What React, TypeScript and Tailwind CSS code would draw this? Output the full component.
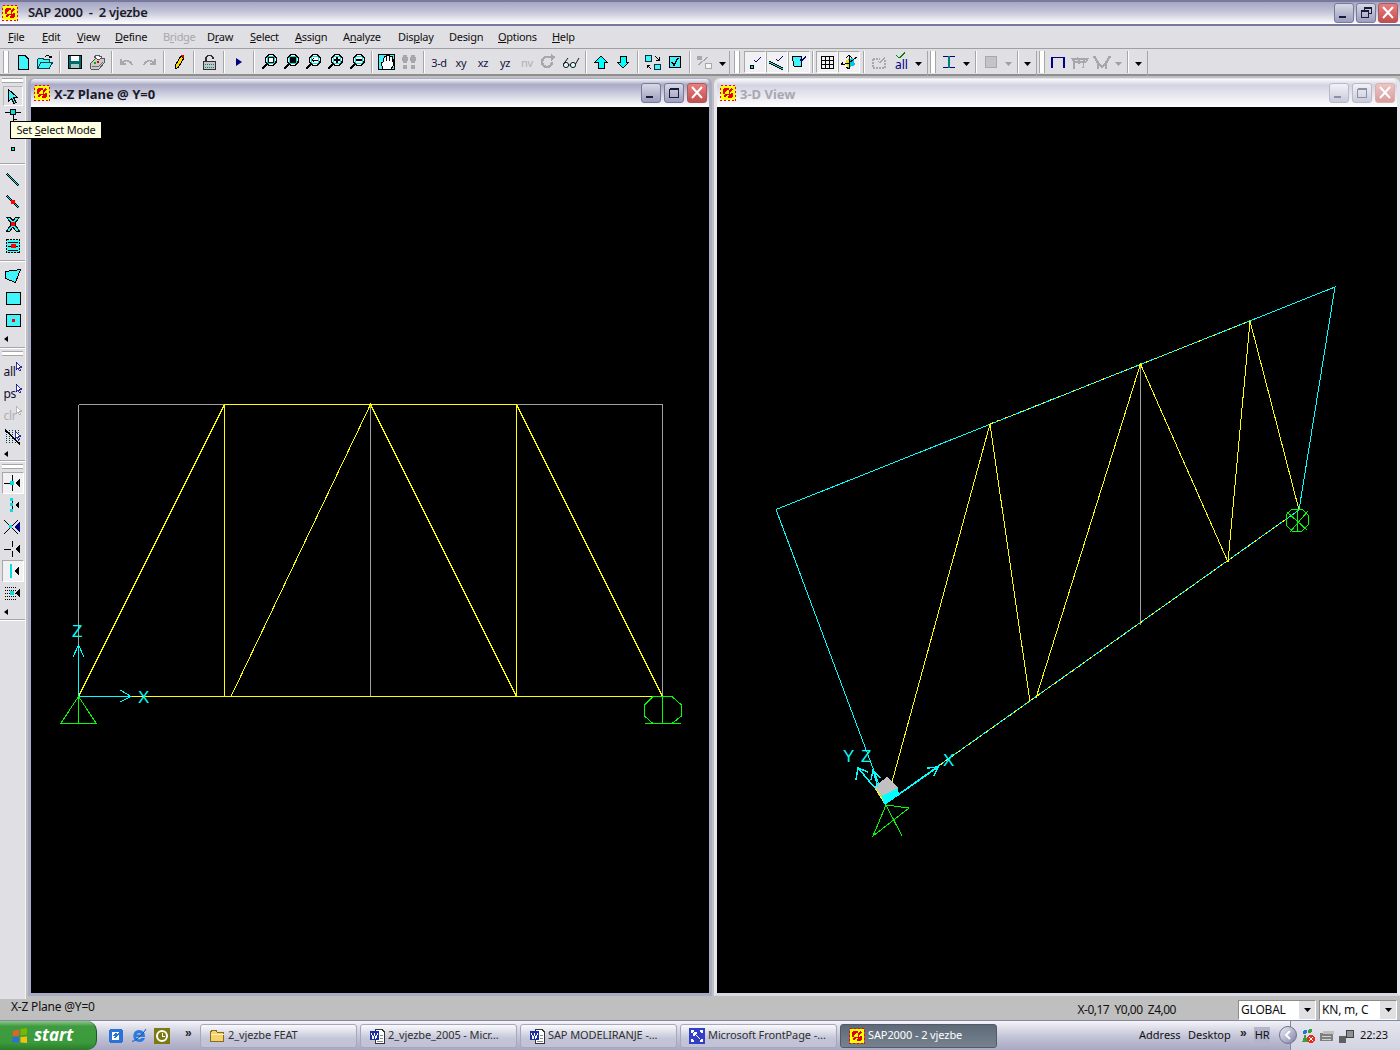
import type { ReactNode } from 'react';

const D = '#40f4fa';

function Ico({ children, w = 16, h = 16 }: { children: ReactNode; w?: number; h?: number }) {
  return (
    <svg width={w} height={h} viewBox={`0 0 ${w} ${h}`} shapeRendering="crispEdges" className="block shrink-0">
      {children}
    </svg>
  );
}

function SapLogo() {
  return (
    <Ico>
      <rect x="1" y="1" width="14" height="14" fill="#ffff00" />
      <rect x="0.5" y="0.5" width="15" height="15" fill="none" stroke="#ff0000" strokeDasharray="2 2" />
      <path d="M4 4L12 12M12 4L4 12M4 4H9M4 4V9M12 12V8M12 12H8" stroke="#e00000" strokeWidth="1.6" fill="none" />
      <rect x="6" y="6" width="3" height="3" fill="#ffff00" />
    </Ico>
  );
}

function Mag({ children }: { children?: ReactNode }) {
  return (
    <Ico w={18} h={18}>
      <circle cx="11" cy="7" r="5.5" fill="#fff" stroke="#000" strokeWidth="1.4" />
      <circle cx="11" cy="7" r="4" fill="none" stroke="#00e0e0" />
      <path d="M7 11L2 16" stroke="#000" strokeWidth="2.4" />
      {children}
    </Ico>
  );
}

function WinBtn({ kind, dim }: { kind: 'min' | 'max' | 'restore' | 'close'; dim?: boolean }) {
  const face =
    kind === 'close'
      ? dim
        ? 'border-[#d9b0b0] bg-[linear-gradient(180deg,#ecc4c4,#d89c9c)]'
        : 'border-[#a85a5a] bg-[linear-gradient(180deg,#e88080,#c44e4e)]'
      : dim
        ? 'border-[#b9bac9] bg-[linear-gradient(180deg,#f2f2f6,#c9cad9)]'
        : 'border-[#777a9c] bg-[linear-gradient(180deg,#d8d9e6,#9c9ebd)]';
  const ink = dim ? '#8e8fa8' : '#1a1a3a';
  return (
    <div className={`flex h-[20px] w-[20px] items-center justify-center rounded-[3px] border ${face}`}>
      <svg width="16" height="16" viewBox="0 0 16 16" shapeRendering="crispEdges">
        {kind === 'min' && <rect x="3" y="11" width="7" height="2" fill={ink} />}
        {kind === 'max' && <path d="M3.5 4.5H12.5V12.5H3.5ZM3.5 3.5H12.5" fill="none" stroke={ink} />}
        {kind === 'restore' && (
          <path d="M6.5 5.5V2.5H13.5V8.5H10.5M3.5 5.5H10.5V12.5H3.5ZM3.5 6.5H10.5M6.5 3.5H13.5" fill="none" stroke={ink} />
        )}
        {kind === 'close' && <path d="M3 2L13 13M13 2L3 13" stroke="#fff" strokeWidth="2" shapeRendering="auto" />}
      </svg>
    </div>
  );
}

function Key({ text, at }: { text: string; at: number }) {
  return (
    <>
      {text.slice(0, at)}
      <span className="underline underline-offset-1">{text[at]}</span>
      {text.slice(at + 1)}
    </>
  );
}

const menus = [
  { label: 'File', at: 0, w: 'w-[34px]' },
  { label: 'Edit', at: 0, w: 'w-[35px]' },
  { label: 'View', at: 0, w: 'w-[38px]' },
  { label: 'Define', at: 0, w: 'w-[48px]' },
  { label: 'Bridge', at: 1, w: 'w-[44px]', dim: true },
  { label: 'Draw', at: 1, w: 'w-[43px]' },
  { label: 'Select', at: 0, w: 'w-[45px]' },
  { label: 'Assign', at: 0, w: 'w-[48px]' },
  { label: 'Analyze', at: 1, w: 'w-[55px]' },
  { label: 'Display', at: 3, w: 'w-[51px]' },
  { label: 'Design', at: 4, w: 'w-[49px]' },
  { label: 'Options', at: 0, w: 'w-[54px]' },
  { label: 'Help', at: 0, w: 'w-[40px]' },
];

function Btn({ children, pressed }: { children: ReactNode; pressed?: boolean }) {
  return (
    <div
      className={`flex h-[22px] w-[22px] shrink-0 items-center justify-center ${
        pressed ? 'border border-[#a8a8a8] border-r-white border-b-white bg-[#f1f1f3]' : ''
      }`}
    >
      {children}
    </div>
  );
}

function Sep({ w = 'w-[8px]' }: { w?: string }) {
  return (
    <div className={`flex h-[22px] shrink-0 justify-center ${w}`}>
      <div className="h-full w-[2px] border-r border-l border-r-white border-l-[#a6a6a6]" />
    </div>
  );
}

function Dd({ dim, w = 'w-[12px]' }: { dim?: boolean; w?: string }) {
  return (
    <div className={`flex h-[22px] shrink-0 items-center justify-center pt-[3px] ${w}`}>
      <svg width="7" height="4" viewBox="0 0 7 4">
        <path d="M0 0H7L3.5 4Z" fill={dim ? '#a0a0a0' : '#000'} />
      </svg>
    </div>
  );
}

function Grip({ w }: { w: string }) {
  return (
    <div className={`flex h-[22px] shrink-0 justify-center ${w}`}>
      <div className="h-full w-[6px] border-x border-x-[#a6a6a6] bg-white" />
    </div>
  );
}

function Txt({ children, dim }: { children: ReactNode; dim?: boolean }) {
  return (
    <span className={`text-[11px] leading-none tracking-[-0.3px] ${dim ? 'text-[#b0b0b0]' : 'text-[#14143c]'}`}>{children}</span>
  );
}

function ArrowUp() {
  return (
    <Ico>
      <path d="M8 2L14 8H11V14H5V8H2Z" fill="#00ffff" stroke="#000" />
    </Ico>
  );
}

function ArrowDown() {
  return (
    <Ico>
      <path d="M5 2H11V8H14L8 14L2 8H5Z" fill="#00ffff" stroke="#000" />
    </Ico>
  );
}

function TopToolbar() {
  return (
    <div className="flex h-[27px] items-start border-b-2 border-b-[#8f8f8f] bg-[#e0dfe3] pt-[2px]">
      <div className="flex h-[25px] w-[730px] shrink-0 border-r border-[#a6a6a6]">
        <Grip w="w-[12px]" />
        <Btn>
          <Ico>
            <path d="M3.5 1.5H10L13.5 5V15.5H3.5Z" fill={D} stroke="#000" />
          </Ico>
        </Btn>
        <Btn>
          <Ico w={18}>
            <path d="M1.5 14.5V5.5L3 4H7L8 5.5H13V8M1.5 14.5L5 8H17L13 14.5Z" fill={D} stroke="#004848" />
            <path d="M9 3C11 1 14 1 15 4M15 4L13 3.5M15 4L16 2" fill="none" stroke="#000" />
          </Ico>
        </Btn>
        <Sep />
        <Btn>
          <Ico>
            <rect x="1.5" y="1.5" width="13" height="13" fill="#006c6c" stroke="#000" />
            <rect x="4" y="2" width="8" height="5" fill="#fff" />
            <rect x="4" y="10" width="8" height="4" fill="#a8c8c8" />
          </Ico>
        </Btn>
        <Btn>
          <Ico w={18}>
            <path d="M4 8L8 4H16V9L11 15H3L2 10Z" fill="#c8c8c8" stroke="#585858" />
            <path d="M6 3L9 1L14 3L11 6Z" fill="#fff" stroke="#585858" />
            <rect x="6" y="8" width="2" height="2" fill="#00b000" />
            <rect x="9" y="7" width="2" height="2" fill="#e00000" />
            <path d="M4 12L11 12L15 8" fill="none" stroke="#707070" />
          </Ico>
        </Btn>
        <Sep />
        <Btn>
          <Ico>
            <path d="M2 5V10H7M2.5 9.5C5 5.5 11 5.5 13 11" fill="none" stroke="#a8a8a8" strokeWidth="1.6" />
          </Ico>
        </Btn>
        <Btn>
          <Ico>
            <path d="M14 5V10H9M13.5 9.5C11 5.5 5 5.5 3 11" fill="none" stroke="#a8a8a8" strokeWidth="1.6" />
          </Ico>
        </Btn>
        <Sep />
        <Btn>
          <Ico>
            <path d="M5 15L4.5 11L10 2L13 4L7.5 13Z" fill="#ffd800" stroke="#000" />
            <path d="M10 2L11 0.5L13.5 2L13 4Z" fill="#e00000" />
          </Ico>
        </Btn>
        <Sep />
        <Btn>
          <Ico>
            <path d="M5 7V3.5L7 1.5H10L12 3.5V5" fill="none" stroke="#303030" strokeWidth="1.3" />
            <rect x="2.5" y="7.5" width="12" height="8" fill="#c4c4c4" stroke="#303030" />
            <path d="M4 10H13M4 13H13" stroke="#008080" strokeDasharray="1 1" />
          </Ico>
        </Btn>
        <Sep />
        <Btn>
          <svg width="6" height="8" viewBox="0 0 6 8">
            <path d="M0 0L6 4L0 8Z" fill="#000080" />
          </svg>
        </Btn>
        <Sep />
        <Btn>
          <Mag>
            <rect x="8.5" y="4.5" width="5" height="5" fill="none" stroke="#000" />
          </Mag>
        </Btn>
        <Btn>
          <Mag>
            <circle cx="11" cy="7" r="3.4" fill="#000" />
          </Mag>
        </Btn>
        <Btn>
          <Mag>
            <path d="M14 7H8M10 5L8 7L10 9" fill="none" stroke="#000" />
          </Mag>
        </Btn>
        <Btn>
          <Mag>
            <path d="M8 7H14M11 4V10" fill="none" stroke="#000" strokeWidth="1.4" />
          </Mag>
        </Btn>
        <Btn>
          <Mag>
            <path d="M8 7H14" fill="none" stroke="#000" strokeWidth="1.4" />
          </Mag>
        </Btn>
        <Sep />
        <Btn>
          <Ico w={18} h={18}>
            <rect x="0.5" y="1.5" width="16" height="15" fill={D} stroke="#000" />
            <path d="M5 16L3 9L5 9L6 5V3H8V8L9 2H11V8L12 3H14V9L15 6H16L15 13L13 16Z" fill="#fff" stroke="#000" />
          </Ico>
        </Btn>
        <Btn>
          <Ico w={18}>
            <ellipse cx="5" cy="5" rx="3" ry="4" fill="#a8a8a8" />
            <ellipse cx="13" cy="5" rx="3" ry="4" fill="#a8a8a8" />
            <rect x="3" y="11" width="4" height="4" rx="1" fill="#a8a8a8" />
            <rect x="11" y="11" width="4" height="4" rx="1" fill="#a8a8a8" />
          </Ico>
        </Btn>
        <Sep />
        <Btn>
          <Txt>3-d</Txt>
        </Btn>
        <Btn>
          <Txt>xy</Txt>
        </Btn>
        <Btn>
          <Txt>xz</Txt>
        </Btn>
        <Btn>
          <Txt>yz</Txt>
        </Btn>
        <Btn>
          <Txt dim>nv</Txt>
        </Btn>
        <Btn>
          <Ico w={18}>
            <path d="M12 8A5 5 0 1 1 8 3H12" fill="none" stroke="#a8a8a8" strokeWidth="2.4" />
            <path d="M11 0L16 3L11 7Z" fill="#a8a8a8" />
          </Ico>
        </Btn>
        <Btn>
          <svg width="18" height="16" viewBox="0 0 18 16" className="block shrink-0">
            <circle cx="4" cy="11" r="2.6" fill="#d8ffff" stroke="#000" strokeWidth="0.9" />
            <circle cx="11" cy="11" r="2.6" fill="#d8ffff" stroke="#000" strokeWidth="0.9" />
            <path d="M6.6 11H8.4M1.6 10L6 4M13.5 10L17 4" fill="none" stroke="#000" strokeWidth="0.9" />
          </svg>
        </Btn>
        <Sep />
        <Btn>
          <ArrowUp />
        </Btn>
        <Btn>
          <ArrowDown />
        </Btn>
        <Sep />
        <Btn>
          <Ico w={18}>
            <rect x="1.5" y="1.5" width="6" height="6" fill={D} stroke="#003040" />
            <rect x="10.5" y="10.5" width="6" height="5" fill={D} stroke="#003040" />
            <path d="M11 2L15 6M15 3V6H12M7 15L3 11M3 14V11H6" fill="none" stroke="#000" />
          </Ico>
        </Btn>
        <Btn>
          <Ico>
            <rect x="2.5" y="2.5" width="11" height="11" fill={D} stroke="#000" />
            <path d="M5 8L7 11L11 4" fill="none" stroke="#000" strokeWidth="1.4" />
          </Ico>
        </Btn>
        <Sep />
        <Btn>
          <Ico w={18}>
            <rect x="1" y="2" width="5" height="4" fill="#a8a8a8" />
            <rect x="9.5" y="9.5" width="6" height="5" fill="#f4f4f4" stroke="#a8a8a8" />
            <path d="M2 11L12 3" stroke="#a8a8a8" strokeWidth="1.4" />
          </Ico>
        </Btn>
        <Dd />
      </div>
      <div className="flex h-[25px] w-[198px] shrink-0 border-r border-[#a6a6a6]">
        <Grip w="w-[14px]" />
        <Btn pressed>
          <Ico>
            <rect x="3" y="11" width="3" height="3" fill="#00e0e0" stroke="#000" />
            <path d="M7 6L9 8L14 3" fill="none" stroke="#000080" strokeWidth="1.4" />
          </Ico>
        </Btn>
        <Btn pressed>
          <Ico w={18}>
            <path d="M1 8L15 15" stroke="#000" strokeWidth="3" />
            <path d="M1 8L15 15" stroke="#00e0e0" />
            <path d="M8 5L10 7L15 2" fill="none" stroke="#000080" strokeWidth="1.4" />
          </Ico>
        </Btn>
        <Btn pressed>
          <Ico w={18}>
            <path d="M2 2H12L11 13L4 12Z" fill={D} stroke="#000" />
            <path d="M10 5L12 7L16 2" fill="none" stroke="#000080" strokeWidth="1.4" />
          </Ico>
        </Btn>
        <Sep w="w-[6px]" />
        <Btn pressed>
          <Ico>
            <path d="M2.5 2.5H14.5V14.5H2.5ZM6.5 2.5V14.5M10.5 2.5V14.5M2.5 6.5H14.5M2.5 10.5H14.5" fill="none" stroke="#000" />
          </Ico>
        </Btn>
        <Btn pressed>
          <Ico w={18}>
            <path d="M6 6L13 4L15 11L8 14Z" fill="#00c8d8" />
            <path d="M6 6H9V13L6 11Z" fill="#f0e000" />
            <path d="M9 1V15M9 1L6 4M9 1L12 4M1 11L9 9L17 3M1 11L3 8M9 15L6 13" fill="none" stroke="#000" />
          </Ico>
        </Btn>
        <Sep />
        <Btn>
          <Ico>
            <path d="M2 5H9M2 5V14H14V5" fill="none" stroke="#a8a8a8" strokeWidth="1.4" strokeDasharray="2 1" />
            <path d="M7 7L9 9L14 3" fill="none" stroke="#a8a8a8" strokeWidth="1.4" />
          </Ico>
        </Btn>
        <Btn>
          <div className="relative h-[20px] w-[16px]">
            <svg width="12" height="7" viewBox="0 0 12 7" className="absolute top-0 left-[2px]" shapeRendering="crispEdges">
              <path d="M1 3L4 6L10 1" fill="none" stroke="#008000" strokeWidth="1.4" />
            </svg>
            <span className="absolute top-[7px] left-[2px] text-[12px] leading-none text-[#000080]">all</span>
          </div>
        </Btn>
        <Dd />
      </div>
      <div className="flex h-[25px] w-[109px] shrink-0 border-r border-[#a6a6a6]">
        <Grip w="w-[10px]" />
        <Btn>
          <Ico>
            <path d="M2 2.5H14M2 13.5H14" stroke="#000080" strokeWidth="1.6" />
            <path d="M8 2V14" stroke="#008080" strokeWidth="1.6" />
          </Ico>
        </Btn>
        <Dd />
        <Sep />
        <Btn>
          <Ico>
            <rect x="2" y="2" width="12" height="12" fill="#a8a8a8" />
            <rect x="3" y="3" width="10" height="10" fill="#c4c4c4" />
          </Ico>
        </Btn>
        <Dd dim />
        <Sep w="w-[7px]" />
        <Dd />
      </div>
      <div className="flex h-[25px] w-[111px] shrink-0 border-r border-[#a6a6a6]">
        <Grip w="w-[10px]" />
        <Btn>
          <Ico>
            <path d="M2 14V3.5H14V14" fill="none" stroke="#000080" strokeWidth="1.4" />
          </Ico>
        </Btn>
        <Btn>
          <Ico w={18}>
            <path d="M1 5H17L15 8H3ZM3 4V15M13 6L12 14M3 7L7 3M8 5V10" fill="none" stroke="#a8a8a8" strokeWidth="1.2" />
          </Ico>
        </Btn>
        <Btn>
          <Ico w={18}>
            <path d="M1 2L5 9V15M17 2L13 9V15M5 9L9 13L13 9" fill="none" stroke="#a8a8a8" strokeWidth="2.4" />
          </Ico>
        </Btn>
        <Dd dim w="w-[10px]" />
        <Sep w="w-[9px]" />
        <Dd />
      </div>
      <div className="h-[25px] flex-1" />
    </div>
  );
}

function VGrip() {
  return <div className="mx-[2px] my-[2px] h-[5px] border-y border-y-[#a6a6a6] bg-white" />;
}

function VSep() {
  return (
    <div className="flex h-[8px] items-center">
      <div className="h-[2px] w-full border-y border-t-[#a6a6a6] border-b-white" />
    </div>
  );
}

function VBtn({ children, pressed, h = 'h-[22px]' }: { children: ReactNode; pressed?: boolean; h?: string }) {
  return (
    <div
      className={`mx-auto flex w-[22px] items-center justify-center ${h} ${
        pressed ? 'border border-[#a8a8a8] border-r-white border-b-white bg-[#f1f1f3]' : ''
      }`}
    >
      {children}
    </div>
  );
}

function Chevron({ h = 'h-[15px]' }: { h?: string }) {
  return (
    <div className={`flex items-center pl-[4px] ${h}`}>
      <svg width="4" height="6" viewBox="0 0 4 6">
        <path d="M4 0L0 3L4 6Z" fill="#000" />
      </svg>
    </div>
  );
}

function Pick({ fill = '#000', children }: { fill?: string; children?: ReactNode }) {
  return (
    <Ico w={18}>
      <path d="M0 8H7M9 8H9M8 0V6M8 10V16" stroke="#000" fill="none" />
      <path d="M16 3V13L11 8Z" fill={fill} />
      {children}
    </Ico>
  );
}

function Cursor({ dim }: { dim?: boolean }) {
  return (
    <svg width="7" height="10" viewBox="0 0 7 10" className="absolute top-[2px] right-0" shapeRendering="crispEdges">
      <path d="M1 0V8L3 6L5 9L6 8L4 5H6.5Z" fill="#fff" stroke={dim ? '#a8a8a8' : '#000080'} strokeWidth="0.8" />
    </svg>
  );
}

function LetterBtn({ text, dim }: { text: string; dim?: boolean }) {
  return (
    <VBtn>
      <div className="relative h-[22px] w-[18px]">
        <span className={`absolute top-[6px] left-0 text-[12px] leading-none tracking-[-0.3px] ${dim ? 'text-[#b0b0b0]' : 'text-[#101030]'}`}>
          {text}
        </span>
        <Cursor dim={dim} />
      </div>
    </VBtn>
  );
}

function LeftToolbar() {
  return (
    <div className="flex w-[26px] shrink-0 flex-col border-r border-[#f4f4f6] bg-[#e0dfe3]">
      <VGrip />
      <VBtn>
        <div className="flex h-[20px] w-[20px] items-center justify-center border border-[#b8b8b8] border-r-white border-b-white">
          <Ico>
            <path d="M3.5 1.5L12.5 9.5H8.5L11 14.5L9 15.5L6.5 10.5L3.5 13.5Z" fill={D} stroke="#000" />
          </Ico>
        </div>
      </VBtn>
      <VBtn h="h-[16px]">
        <Ico>
          <path d="M0 5.5H5M11 5.5H16" stroke="#000" />
          <rect x="5.5" y="2.5" width="5" height="5" fill="#00e0e0" stroke="#000" />
          <path d="M8 8V14L10 12H12" fill="none" stroke="#000" />
        </Ico>
      </VBtn>
      <div className="h-[15px]" />
      <VBtn>
        <Ico>
          <rect x="6.5" y="6.5" width="3" height="3" fill="#00e0e0" stroke="#000" />
        </Ico>
      </VBtn>
      <VSep />
      <div className="h-[1px]" />
      <VBtn>
        <Ico>
          <path d="M2 2L14 14" stroke="#000" strokeWidth="2.6" />
          <path d="M2 2L14 14" stroke="#00e0e0" />
        </Ico>
      </VBtn>
      <VBtn>
        <Ico>
          <path d="M2 2L14 14" stroke="#000" strokeWidth="2.6" />
          <path d="M2 2L14 14" stroke="#00e0e0" />
          <rect x="6" y="6" width="4" height="4" fill="#ff0000" />
        </Ico>
      </VBtn>
      <VBtn>
        <Ico>
          <path d="M2 1L6 8L2 15H5L8 11L11 15H14L10 8L14 1H11L8 5L5 1Z" fill={D} stroke="#000" />
          <path d="M1 1L15 15M15 1L1 15" stroke="#004040" />
          <rect x="6" y="6" width="4" height="4" fill="#ff0000" />
        </Ico>
      </VBtn>
      <VBtn>
        <Ico>
          <rect x="1.5" y="1.5" width="13" height="13" fill={D} stroke="#000" strokeDasharray="2 1" />
          <path d="M3 4H13M3 12H13" stroke="#000" />
          <rect x="6" y="6" width="5" height="4" fill="#ff0000" />
          <path d="M3 8H6M11 8H13" stroke="#000" />
        </Ico>
      </VBtn>
      <VSep />
      <VBtn>
        <Ico>
          <path d="M0.5 3.5L15.5 1.5L10.5 14.5L0.5 10.5Z" fill={D} stroke="#000" />
        </Ico>
      </VBtn>
      <VBtn>
        <Ico>
          <rect x="1.5" y="2.5" width="14" height="12" fill={D} stroke="#000" />
        </Ico>
      </VBtn>
      <VBtn>
        <Ico>
          <rect x="1.5" y="2.5" width="14" height="12" fill={D} stroke="#000" />
          <rect x="7" y="7" width="3" height="3" fill="#ff0000" />
        </Ico>
      </VBtn>
      <Chevron />
      <div className="mt-[1px] h-[2px] border-y border-t-[#a6a6a6] border-b-white" />
      <VGrip />
      <div className="h-[2px]" />
      <LetterBtn text="all" />
      <LetterBtn text="ps" />
      <LetterBtn text="clr" dim />
      <VBtn>
        <div className="relative h-[16px] w-[16px]">
          <Ico>
            <path d="M1 1V15M4 1V15M7 1V15M10 1V15M13 1V15" stroke="#004040" strokeDasharray="1 1" />
            <path d="M0 1L15 15" stroke="#000" strokeWidth="1.6" />
          </Ico>
          <Cursor />
        </div>
      </VBtn>
      <Chevron h="h-[12px]" />
      <div className="h-[2px] border-y border-t-[#a6a6a6] border-b-white" />
      <VGrip />
      <div className="h-[1px]" />
      <VBtn pressed>
        <Pick>
          <rect x="6" y="6" width="4" height="4" fill="#00e0e0" />
        </Pick>
      </VBtn>
      <VBtn>
        <Ico w={18}>
          <path d="M8 3V14" stroke="#000" />
          <rect x="6" y="1" width="3" height="3" fill="#00e0e0" />
          <rect x="6" y="6" width="3" height="3" fill="#00e0e0" />
          <rect x="6" y="12" width="3" height="3" fill="#00e0e0" />
          <path d="M15 4V12L11 8Z" fill="#000" />
        </Ico>
      </VBtn>
      <VBtn>
        <Ico w={18}>
          <path d="M0 1L14 15M14 1L0 15" stroke="#000" />
          <rect x="5" y="6" width="3" height="3" fill="#00e0e0" />
          <path d="M16 2V13L10 8Z" fill="#000080" />
        </Ico>
      </VBtn>
      <VBtn>
        <Pick />
      </VBtn>
      <VBtn pressed>
        <Ico w={18}>
          <path d="M7 1V15" stroke="#00e0e0" strokeWidth="2" />
          <path d="M15 4V12L10 8Z" fill="#000" />
        </Ico>
      </VBtn>
      <VBtn>
        <Ico w={18}>
          <path d="M1 2H13M1 5H13M1 8H13M1 11H13M1 14H13" stroke="#000" strokeDasharray="1 1" />
          <rect x="6" y="6" width="4" height="4" fill="#00e0e0" />
          <path d="M16 4V12L11 8Z" fill="#000" />
        </Ico>
      </VBtn>
      <Chevron />
      <div className="h-[2px] border-y border-t-[#a6a6a6] border-b-white" />
      <div className="flex-1" />
    </div>
  );
}

function MdiWindow({
  title,
  active,
  children,
  className,
}: {
  title: string;
  active?: boolean;
  children: ReactNode;
  className: string;
}) {
  return (
    <div
      className={`flex flex-col rounded-t-[6px] border-[3px] border-t-[1px] ${
        active ? 'border-[#a9aac3]' : 'border-[#e6e6ee] border-b-[#d8d8e2]'
      } ${className}`}
    >
      <div
        className={`flex h-[28px] shrink-0 items-center rounded-t-[4px] pl-[3px] ${
          active
            ? 'bg-[linear-gradient(180deg,#f4f4f8_0%,#a9aac5_20%,#dfe0ea_70%,#ffffff_100%)]'
            : 'bg-[linear-gradient(180deg,#fafafc_0%,#d3d4e2_22%,#eeeef4_70%,#ffffff_100%)]'
        }`}
      >
        <SapLogo />
        <span
          className={`ml-[4px] pt-[3px] text-[13px] font-bold ${
            active ? 'text-[#1a1a2a]' : 'text-[#a8a8b0]'
          }`}
        >
          {title}
        </span>
        <div className="mr-[2px] ml-auto flex gap-[3px]">
          <WinBtn kind="min" dim={!active} />
          <WinBtn kind="max" dim={!active} />
          <WinBtn kind="close" dim={!active} />
        </div>
      </div>
      <div className="min-h-0 flex-1 bg-black">{children}</div>
    </div>
  );
}

function XzView() {
  return (
    <svg viewBox="31 107 678 886" className="block h-full w-full" shapeRendering="crispEdges" fill="none">
      <path d="M78.5 404.5H662.5V696.5M78.5 404.5V696.5M370.5 404.5V696.5" stroke="#a0a0a0" />
      <path
        d="M224.5 404.5H516.5M224.5 404.5V696.5M516.5 404.5V696.5M78.5 696.5H662.5M78.5 696.5L224.5 404.5M231 696.5L370.5 404.5L516.5 696.5M516.5 404.5L662.5 696.5"
        stroke="#ffff00"
      />
      <path d="M78.5 696.5V645M73 657L78.5 645L84 657M78.5 696.5H130M120 690L131 696.5L120 702" stroke="#00ffff" />
      <path d="M78.5 696.5L61 723H96ZM78.5 696.5V723" stroke="#00ff00" />
      <path
        d="M653 696.5H672L681.5 705V716L672 723.5M653 696.5L644.5 705V716L653 723.5M645 723.5H681M662.5 696.5V723.5"
        stroke="#00ff00"
      />
      <text x="72" y="637" fill="#00ffff" fontSize="17" fontWeight="200" shapeRendering="auto" className="font-['Liberation_Sans',sans-serif]">
        Z
      </text>
      <text x="138" y="703" fill="#00ffff" fontSize="17" fontWeight="200" shapeRendering="auto" className="font-['Liberation_Sans',sans-serif]">
        X
      </text>
    </svg>
  );
}

function ThreeDView() {
  return (
    <svg viewBox="717 107 680 886" className="block h-full w-full" shapeRendering="crispEdges" fill="none">
      <path d="M1140.5 364V625" stroke="#a0a0a0" />
      <path d="M776 509.5L1335 287L1299 510M776 509.5L886 803L1299 510" stroke="#00ffff" />
      <path d="M990 424L1250 321" stroke="#ffff00" strokeDasharray="3 5" />
      <path d="M940 765L1285 520" stroke="#ffff00" strokeDasharray="3 4" />
      <path
        d="M892 782L990 424L1030 702M1036 698L1140.5 364L1228 562L1250 321L1299 510"
        stroke="#ffff00"
      />
      <path d="M1292 509H1302L1308 515V525L1302 531H1292L1286 525V515ZM1287 512L1307 530M1308 511L1290 532M1297 509V531" stroke="#00ff00" />
      <path d="M886 805L909 808L873 836ZM886 805L902 836" stroke="#00ff00" />
      <path d="M874 787L887 777L898 788L880 797Z" fill="#c0c0c0" />
      <path d="M880 797L898 788L899 795L885 805Z" fill="#00ffff" />
      <path d="M876 789L883 801" stroke="#ffff00" />
      <path
        d="M898 795L938 767M927 768L938 767L934 776M875 788L858 768M856 780L858 768L868 772M878 787L873 770M871 780L873 770L880 778"
        stroke="#00ffff"
        strokeWidth="1.5"
      />
      <text x="843" y="762" fill="#00ffff" fontSize="17" shapeRendering="auto" className="font-['Liberation_Sans',sans-serif]">
        Y
      </text>
      <text x="861" y="762" fill="#00ffff" fontSize="17" shapeRendering="auto" className="font-['Liberation_Sans',sans-serif]">
        Z
      </text>
      <text x="943" y="766" fill="#00ffff" fontSize="17" shapeRendering="auto" className="font-['Liberation_Sans',sans-serif]">
        X
      </text>
    </svg>
  );
}

function Combo({ text }: { text: string }) {
  return (
    <div className="flex h-[20px] w-[78px] items-center justify-between border border-[#8c8c8c] border-r-white border-b-white bg-white pl-[2px] text-[12px] text-[#101010]">
      <span>{text}</span>
      <div className="flex h-[18px] w-[16px] items-center justify-center bg-[#e0dfe3]">
        <svg width="7" height="4" viewBox="0 0 7 4">
          <path d="M0 0H7L3.5 4Z" fill="#000" />
        </svg>
      </div>
    </div>
  );
}

function StatusBar() {
  return (
    <div className="flex h-[21px] shrink-0 items-center bg-[#bfbfbf] text-[12px] tracking-[-0.2px] text-[#101010]">
      <span className="ml-[11px] pb-[5px]">X-Z Plane @Y=0</span>
      <span className="mr-[62px] ml-auto tracking-[-0.5px]">X-0,17&nbsp; Y0,00&nbsp; Z4,00</span>
      <div className="mr-[3px] flex gap-[3px]">
        <Combo text="GLOBAL" />
        <Combo text="KN, m, C" />
      </div>
    </div>
  );
}

function WordIcon() {
  return (
    <Ico>
      <path d="M6.5 1.5H13L15.5 4V15.5H6.5Z" fill="#fff" stroke="#333" />
      <rect x="1" y="3" width="9" height="9" fill="#1a2ea8" />
      <path d="M2.5 5L4 10.5L5.5 6.5L7 10.5L8.5 5" stroke="#fff" fill="none" />
      <path d="M11 7H14M11 10H14M8 13H14" stroke="#888" />
    </Ico>
  );
}

function TaskBtn({ icon, label, active }: { icon: ReactNode; label: string; active?: boolean }) {
  return (
    <div
      className={`flex h-[24px] w-[157px] shrink-0 items-center gap-[3px] truncate rounded-[3px] border pl-[8px] text-[11px] tracking-[-0.1px] ${
        active
          ? 'border-[#525a68] bg-[linear-gradient(180deg,#5e6a78,#76828e)] text-white'
          : 'border-[#a6a7bb] bg-[linear-gradient(180deg,#fbfbfd,#c4c5d8_60%,#c0c1d5)] text-[#303030]'
      }`}
    >
      {icon}
      <span>{label}</span>
    </div>
  );
}

function Taskbar() {
  return (
    <div className="flex h-[30px] shrink-0 items-center border-t border-[#8587a5] bg-[linear-gradient(180deg,#f4f4f8,#c2c3d6_55%,#a8a9c2)]">
      <div className="flex h-[29px] w-[97px] shrink-0 items-center gap-[5px] rounded-r-[10px] border-r border-[#1d5a1d] bg-[linear-gradient(180deg,#8ec98e_0%,#3f9b3f_18%,#3b9a3b_75%,#2a7a2a_100%)] pl-[11px]">
        <svg width="18" height="18" viewBox="0 0 18 18">
          <path d="M2 4L8 2.5V8.5L1.5 9Z" fill="#e8602c" />
          <path d="M9.5 2L16 1V7.5L9.5 8.5Z" fill="#7ab800" />
          <path d="M1.5 10L8 10V15.5L1 15Z" fill="#2f6fdc" />
          <path d="M9.5 10L16 9.5V16L9.5 15.5Z" fill="#f4c20d" />
        </svg>
        <span className="pb-[1px] font-['Noto_Sans',sans-serif] text-[17px] font-bold text-white italic">start</span>
      </div>
      <div className="ml-[11px] flex w-[92px] shrink-0 items-center gap-[7px]">
        <Ico>
          <rect x="1" y="1" width="14" height="14" rx="3" fill="#2a72d8" />
          <path d="M4 4H11V12H4Z" fill="#fff" />
          <path d="M5 8L8 6L7 10L12 4" fill="none" stroke="#2a72d8" strokeWidth="1.4" />
        </Ico>
        <Ico>
          <path d="M8 2A6 6 0 1 0 14 10H10.5A3 3 0 0 1 5 9H14A6 6 0 0 0 8 2ZM5.5 6.5A3 3 0 0 1 10.5 6.5Z" fill="#2a7ae0" shapeRendering="auto" />
          <path d="M1 13C3 15 12 6 15 1" stroke="#1a52b0" fill="none" shapeRendering="auto" />
        </Ico>
        <Ico>
          <rect x="0" y="0" width="16" height="16" fill="#7a7a10" />
          <circle cx="8" cy="8" r="5" fill="#7a7a10" stroke="#fff" strokeWidth="2" shapeRendering="auto" />
          <path d="M8 5V8H11" stroke="#fff" fill="none" />
        </Ico>
        <span className="ml-[8px] pb-[6px] font-['Liberation_Sans',sans-serif] text-[12px] leading-none font-bold text-[#202020]">
          »
        </span>
      </div>
      <div className="flex gap-[3px]">
        <TaskBtn
          label="2_vjezbe FEAT"
          icon={
            <Ico>
              <path d="M1.5 13.5V4L3 2.5H7L8.5 4.5H14.5V13.5Z" fill="#f4d26e" stroke="#8a6a20" />
              <path d="M1.5 6.5H14.5" stroke="#fff0b0" />
            </Ico>
          }
        />
        <TaskBtn label="2_vjezbe_2005 - Micr…" icon={<WordIcon />} />
        <TaskBtn label="SAP  MODELIRANJE -…" icon={<WordIcon />} />
        <TaskBtn
          label="Microsoft FrontPage -…"
          icon={
            <Ico>
              <rect x="0" y="0" width="16" height="16" fill="#2f3fc8" />
              <path d="M3 5V3H5M11 3H13V5M3 11V13H5M13 11V13H11M5 5L11 11M5 5H8M5 5V8" fill="none" stroke="#fff" strokeWidth="1.4" />
            </Ico>
          }
        />
        <TaskBtn label="SAP2000 - 2 vjezbe" icon={<SapLogo />} active />
      </div>
      <span className="ml-[142px] w-[49px] shrink-0 text-[11px] text-[#101010]">Address</span>
      <span className="w-[47px] shrink-0 text-[11px] text-[#101010]">Desktop</span>
      <span className="w-[19px] shrink-0 pb-[6px] pl-[5px] font-['Liberation_Sans',sans-serif] text-[12px] leading-none font-bold text-[#202020]">
        »
      </span>
      <div className="flex h-[18px] w-[16px] shrink-0 items-center justify-center bg-[#b4b5ca] text-[11px] tracking-[-0.3px] text-[#101010]">HR</div>
      <div className="relative ml-[20px] flex h-full min-w-0 flex-1 items-center gap-[3px] border-l border-[#8587a5] bg-[linear-gradient(180deg,#e6e6ee,#d2d3e2)] pl-[9px] text-[11px] text-[#101010]">
        <div className="absolute top-[5px] -left-[12px] flex h-[18px] w-[18px] items-center justify-center rounded-full border border-[#6f7192] bg-[linear-gradient(135deg,#eeeef6,#8082a6)]">
          <svg width="8" height="10" viewBox="0 0 8 10">
            <path d="M6 1L2 5L6 9" fill="none" stroke="#fff" strokeWidth="2" />
          </svg>
        </div>
        <Ico>
          <circle cx="5" cy="4" r="2" fill="#2a72d8" />
          <path d="M2 14L5 6L8 14Z" fill="#3aa03a" />
          <circle cx="10" cy="3" r="2" fill="#30a030" />
          <circle cx="11" cy="11" r="4" fill="#e03020" />
          <path d="M9 9L13 13M13 9L9 13" stroke="#fff" />
        </Ico>
        <Ico>
          <rect x="1" y="5" width="13" height="8" fill="#808080" />
          <rect x="4" y="3" width="11" height="3" fill="#c0c0c0" />
          <path d="M3 8H12M3 11H12" stroke="#d0d0d0" />
        </Ico>
        <Ico>
          <rect x="1" y="8" width="7" height="7" fill="#606060" />
          <rect x="8" y="2" width="7" height="7" fill="#909090" stroke="#404040" />
        </Ico>
        <span className="ml-[3px]">22:23</span>
      </div>
    </div>
  );
}

export default function App() {
  return (
    <div className="flex h-[1050px] w-[1400px] flex-col overflow-hidden bg-[#bfbfbf] font-['Noto_Sans','Liberation_Sans',sans-serif] text-[11px]">
      <div className="flex h-[26px] shrink-0 items-center border-t-2 border-b-2 border-t-[#777a9c] border-b-[#777a9c] bg-[linear-gradient(180deg,#a4a5c2_0%,#c4c5d8_45%,#ffffff_100%)] pl-[2px]">
        <SapLogo />
        <span className="ml-[10px] text-[13px] font-semibold tracking-[-0.3px] text-[#1a1a2a]">SAP 2000&nbsp; -&nbsp; 2 vjezbe</span>
        <div className="mr-[2px] ml-auto flex gap-[2px]">
          <WinBtn kind="min" />
          <WinBtn kind="restore" />
          <WinBtn kind="close" />
        </div>
      </div>
      <div className="flex h-[23px] shrink-0 items-center border-b border-b-[#a0a0a0] bg-[#e0dfe3] pt-[1px] pl-[8px] text-[11px] tracking-[-0.3px] text-[#101010]">
        {menus.map((m) => (
          <span key={m.label} className={`${m.w} shrink-0 ${m.dim ? 'text-[#a8a8a8]' : ''}`}>
            <Key text={m.label} at={m.at} />
          </span>
        ))}
      </div>
      <TopToolbar />
      <div className="relative flex h-[923px] shrink-0">
        <LeftToolbar />
        <div className="flex flex-1 gap-[2px] pt-[2px] pb-[3px] pl-[2px]">
          <MdiWindow title="X-Z Plane  @  Y=0" active className="w-[684px]">
            <XzView />
          </MdiWindow>
          <MdiWindow title="3-D View" className="w-[686px]">
            <ThreeDView />
          </MdiWindow>
        </div>
        <div className="absolute top-[45px] left-[10px] flex h-[18px] w-[92px] items-center justify-center border border-black bg-[#ffffe1] text-[11px] tracking-[-0.2px] text-[#101010]">
          Set&nbsp;
          <Key text="Select" at={0} />
          &nbsp;Mode
        </div>
      </div>
      <StatusBar />
      <Taskbar />
    </div>
  );
}
